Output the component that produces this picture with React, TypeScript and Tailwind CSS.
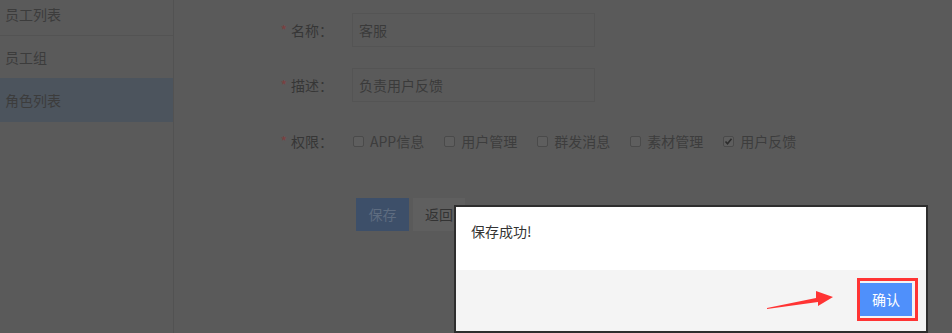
import React from "react";

const font = { fontFamily: '"Microsoft YaHei", "Noto Sans CJK SC", "Noto Sans", sans-serif' };

const perms = [
  { name: "APP信息", checked: false },
  { name: "用户管理", checked: false },
  { name: "群发消息", checked: false },
  { name: "素材管理", checked: false },
  { name: "用户反馈", checked: true },
];

const Label = ({ text }: { text: string }) => (
  <div className="w-[174px] shrink-0 text-right pr-[19px] text-[14px] text-[#363636]">
    <span className="text-[#7c3f3f] mr-[4px]">*</span>
    {text}：
  </div>
);

const Checkbox = ({ checked }: { checked: boolean }) => (
  <span className="w-[11px] h-[11px] rounded-[2px] border border-[#4a4a4a] bg-[#5e5e5e] flex items-center justify-center">
    {checked && (
      <svg width="9" height="9" viewBox="0 0 9 9">
        <path d="M1.5 4.5 L3.5 6.8 L7.5 1.8" stroke="#2c2c2c" strokeWidth="1.6" fill="none" />
      </svg>
    )}
  </span>
);

const Sidebar = () => (
  <aside className="w-[174px] shrink-0 border-r border-[#525252] text-[14px] text-[#3c3c3c]">
    <div className="h-[36px] flex items-end pb-[10px] pl-[5px] border-b border-[#535353]">员工列表</div>
    <div className="h-[42px] flex items-center pl-[5px]">员工组</div>
    <div className="h-[44px] flex items-center pl-[5px] bg-[#4c545d]">角色列表</div>
  </aside>
);

const Form = () => (
  <main className="flex-1 pt-[13px] pl-[4px]">
    <div className="flex items-center h-[34px]">
      <Label text="名称" />
      <div className="w-[243px] h-[34px] border border-[#545454] flex items-center px-[6px] text-[14px] text-[#3a3a3a]">客服</div>
    </div>
    <div className="flex items-center h-[34px] mt-[21px]">
      <Label text="描述" />
      <div className="w-[243px] h-[34px] border border-[#545454] flex items-center px-[6px] text-[14px] text-[#3a3a3a]">负责用户反馈</div>
    </div>
    <div className="flex items-center h-[34px] mt-[22px]">
      <Label text="权限" />
      <div className="flex items-center gap-[20px] text-[14px] text-[#3d3d3d] ml-[1px]">
        {perms.map((p) => (
          <label key={p.name} className="flex items-center gap-[6px]">
            <Checkbox checked={p.checked} />
            {p.name}
          </label>
        ))}
      </div>
    </div>
    <div className="flex gap-[4px] mt-[40px] ml-[178px]">
      <button className="w-[53px] h-[33px] bg-[#3d4f69] text-[#5e6c80] text-[14px]">保存</button>
      <button className="w-[52px] h-[33px] bg-[#5f5f5f] text-[#333] text-[14px]">返回</button>
    </div>
  </main>
);

const Dialog = () => (
  <div className="absolute left-[454px] top-[205px] w-[474px] h-[128px] border-[2px] border-[#2e2e2e] bg-white flex flex-col">
    <div className="h-[63px] pl-[15px] pt-[14px] text-[14px] text-[#333]">保存成功!</div>
    <div className="flex-1 bg-[#f4f4f4] flex justify-end items-start pt-[13px] pr-[14px]">
      <div className="relative">
        <button className="w-[52px] h-[33px] bg-[#4f90fb] text-white text-[14px]">确认</button>
        <div className="absolute -left-[3px] -top-[5px] w-[61px] h-[43px] border-[3px] border-[#ff3434]" />
      </div>
    </div>
  </div>
);

const Arrow = () => (
  <svg className="absolute left-[760px] top-[285px]" width="80" height="30" viewBox="0 0 80 30">
    <polygon points="7,23 56,13 56,6 73,12 58,21 58,17 7,24" fill="#ff3434" />
  </svg>
);

export default function App() {
  return (
    <div className="relative w-[952px] h-[333px] overflow-hidden bg-[#5a5a5a]" style={font}>
      <div className="flex h-full">
        <Sidebar />
        <Form />
      </div>
      <Dialog />
      <Arrow />
    </div>
  );
}
